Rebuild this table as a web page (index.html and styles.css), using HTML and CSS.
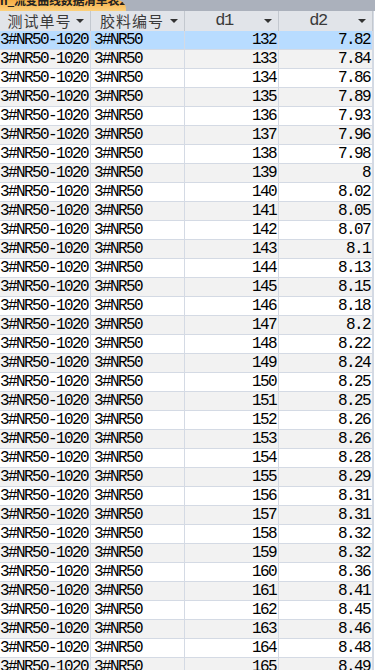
FILE: index.html
```html
<!DOCTYPE html>
<html>
<head>
<meta charset="utf-8">
<link rel="stylesheet" href="styles.css">
</head>
<body>
<div class="topbar"><div class="tab"><span class="tab-text">h_流变曲线数据清单表2</span></div></div>
<div class="sheet">
  <div class="row head">
    <div class="cell hc"><span class="ht">测试单号</span><span class="arrow"></span></div>
    <div class="cell hc"><span class="ht">胶料编号</span><span class="arrow"></span></div>
    <div class="cell hc"><span class="ht mono">d1</span><span class="arrow"></span></div>
    <div class="cell hc"><span class="ht mono">d2</span><span class="arrow"></span></div>
  </div>
  <div class="row sel"><div class="cell">3#NR50-1020</div><div class="cell pad">3#NR50</div><div class="cell num">132</div><div class="cell num">7.82</div></div>
  <div class="row alt"><div class="cell">3#NR50-1020</div><div class="cell pad">3#NR50</div><div class="cell num">133</div><div class="cell num">7.84</div></div>
  <div class="row"><div class="cell">3#NR50-1020</div><div class="cell pad">3#NR50</div><div class="cell num">134</div><div class="cell num">7.86</div></div>
  <div class="row alt"><div class="cell">3#NR50-1020</div><div class="cell pad">3#NR50</div><div class="cell num">135</div><div class="cell num">7.89</div></div>
  <div class="row"><div class="cell">3#NR50-1020</div><div class="cell pad">3#NR50</div><div class="cell num">136</div><div class="cell num">7.93</div></div>
  <div class="row alt"><div class="cell">3#NR50-1020</div><div class="cell pad">3#NR50</div><div class="cell num">137</div><div class="cell num">7.96</div></div>
  <div class="row"><div class="cell">3#NR50-1020</div><div class="cell pad">3#NR50</div><div class="cell num">138</div><div class="cell num">7.98</div></div>
  <div class="row alt"><div class="cell">3#NR50-1020</div><div class="cell pad">3#NR50</div><div class="cell num">139</div><div class="cell num">8</div></div>
  <div class="row"><div class="cell">3#NR50-1020</div><div class="cell pad">3#NR50</div><div class="cell num">140</div><div class="cell num">8.02</div></div>
  <div class="row alt"><div class="cell">3#NR50-1020</div><div class="cell pad">3#NR50</div><div class="cell num">141</div><div class="cell num">8.05</div></div>
  <div class="row"><div class="cell">3#NR50-1020</div><div class="cell pad">3#NR50</div><div class="cell num">142</div><div class="cell num">8.07</div></div>
  <div class="row alt"><div class="cell">3#NR50-1020</div><div class="cell pad">3#NR50</div><div class="cell num">143</div><div class="cell num">8.1</div></div>
  <div class="row"><div class="cell">3#NR50-1020</div><div class="cell pad">3#NR50</div><div class="cell num">144</div><div class="cell num">8.13</div></div>
  <div class="row alt"><div class="cell">3#NR50-1020</div><div class="cell pad">3#NR50</div><div class="cell num">145</div><div class="cell num">8.15</div></div>
  <div class="row"><div class="cell">3#NR50-1020</div><div class="cell pad">3#NR50</div><div class="cell num">146</div><div class="cell num">8.18</div></div>
  <div class="row alt"><div class="cell">3#NR50-1020</div><div class="cell pad">3#NR50</div><div class="cell num">147</div><div class="cell num">8.2</div></div>
  <div class="row"><div class="cell">3#NR50-1020</div><div class="cell pad">3#NR50</div><div class="cell num">148</div><div class="cell num">8.22</div></div>
  <div class="row alt"><div class="cell">3#NR50-1020</div><div class="cell pad">3#NR50</div><div class="cell num">149</div><div class="cell num">8.24</div></div>
  <div class="row"><div class="cell">3#NR50-1020</div><div class="cell pad">3#NR50</div><div class="cell num">150</div><div class="cell num">8.25</div></div>
  <div class="row alt"><div class="cell">3#NR50-1020</div><div class="cell pad">3#NR50</div><div class="cell num">151</div><div class="cell num">8.25</div></div>
  <div class="row"><div class="cell">3#NR50-1020</div><div class="cell pad">3#NR50</div><div class="cell num">152</div><div class="cell num">8.26</div></div>
  <div class="row alt"><div class="cell">3#NR50-1020</div><div class="cell pad">3#NR50</div><div class="cell num">153</div><div class="cell num">8.26</div></div>
  <div class="row"><div class="cell">3#NR50-1020</div><div class="cell pad">3#NR50</div><div class="cell num">154</div><div class="cell num">8.28</div></div>
  <div class="row alt"><div class="cell">3#NR50-1020</div><div class="cell pad">3#NR50</div><div class="cell num">155</div><div class="cell num">8.29</div></div>
  <div class="row"><div class="cell">3#NR50-1020</div><div class="cell pad">3#NR50</div><div class="cell num">156</div><div class="cell num">8.31</div></div>
  <div class="row alt"><div class="cell">3#NR50-1020</div><div class="cell pad">3#NR50</div><div class="cell num">157</div><div class="cell num">8.31</div></div>
  <div class="row"><div class="cell">3#NR50-1020</div><div class="cell pad">3#NR50</div><div class="cell num">158</div><div class="cell num">8.32</div></div>
  <div class="row alt"><div class="cell">3#NR50-1020</div><div class="cell pad">3#NR50</div><div class="cell num">159</div><div class="cell num">8.32</div></div>
  <div class="row"><div class="cell">3#NR50-1020</div><div class="cell pad">3#NR50</div><div class="cell num">160</div><div class="cell num">8.36</div></div>
  <div class="row alt"><div class="cell">3#NR50-1020</div><div class="cell pad">3#NR50</div><div class="cell num">161</div><div class="cell num">8.41</div></div>
  <div class="row"><div class="cell">3#NR50-1020</div><div class="cell pad">3#NR50</div><div class="cell num">162</div><div class="cell num">8.45</div></div>
  <div class="row alt"><div class="cell">3#NR50-1020</div><div class="cell pad">3#NR50</div><div class="cell num">163</div><div class="cell num">8.46</div></div>
  <div class="row"><div class="cell">3#NR50-1020</div><div class="cell pad">3#NR50</div><div class="cell num">164</div><div class="cell num">8.48</div></div>
  <div class="row alt"><div class="cell">3#NR50-1020</div><div class="cell pad">3#NR50</div><div class="cell num">165</div><div class="cell num">8.49</div></div>
</div>
</body>
</html>
```
FILE: styles.css
```css
html, body {
  margin: 0;
  padding: 0;
  background: #ffffff;
  overflow: hidden;
  height: 670px;
}
.topbar {
  height: 11px;
  background: #abb1bc;
  overflow: hidden;
}
.tab {
  width: 126px;
  height: 11px;
  background: linear-gradient(#f7ad42, #fbd07c);
  border-top-right-radius: 9px;
  overflow: hidden;
}
.tab-text {
  display: block;
  margin-top: -7px;
  font-family: "Noto Sans CJK SC", sans-serif;
  font-size: 12px;
  font-weight: bold;
  line-height: 14px;
  color: #222;
  white-space: nowrap;
  letter-spacing: -0.3px;
}
.sheet {
  width: 373px;
  border-right: 1px solid #d4dae4;
}
.row {
  display: grid;
  grid-template-columns: 91px 94px 94px 94px;
  height: 19px;
}
.row.alt { background: #f2f2f2; }
.row.sel { background: #b8dcff; }
.cell {
  box-sizing: border-box;
  border-right: 1px solid #d4dae4;
  border-bottom: 1px solid #d4dae4;
  font-family: "Liberation Mono", monospace;
  font-size: 16px;
  letter-spacing: -1.6px;
  line-height: 18px;
  color: #000;
  white-space: nowrap;
  overflow: hidden;
  padding-left: 0;
}
.cell.pad {
  padding-left: 3px;
}
.cell.num {
  text-align: right;
  padding-right: 2px;
}
.row.head {
  height: 20px;
  background: #e1e4e9;
}
.hc {
  display: flex;
  align-items: center;
  border-right: 1px solid #c3c8cf;
  border-bottom: none;
  padding: 0 6px 0 3px;
  overflow: visible;
}
.ht {
  flex: 1;
  text-align: center;
  font-family: "Noto Sans CJK SC", sans-serif;
  font-size: 15px;
  letter-spacing: 1px;
  line-height: 20px;
  color: #3a3a3a;
}
.ht.mono {
  font-family: "Liberation Mono", monospace;
  font-size: 17px;
  letter-spacing: -1.5px;
  padding-right: 4px;
}
.arrow {
  width: 0;
  height: 0;
  border-left: 4px solid transparent;
  border-right: 4px solid transparent;
  border-top: 4px solid #333;
}
```
